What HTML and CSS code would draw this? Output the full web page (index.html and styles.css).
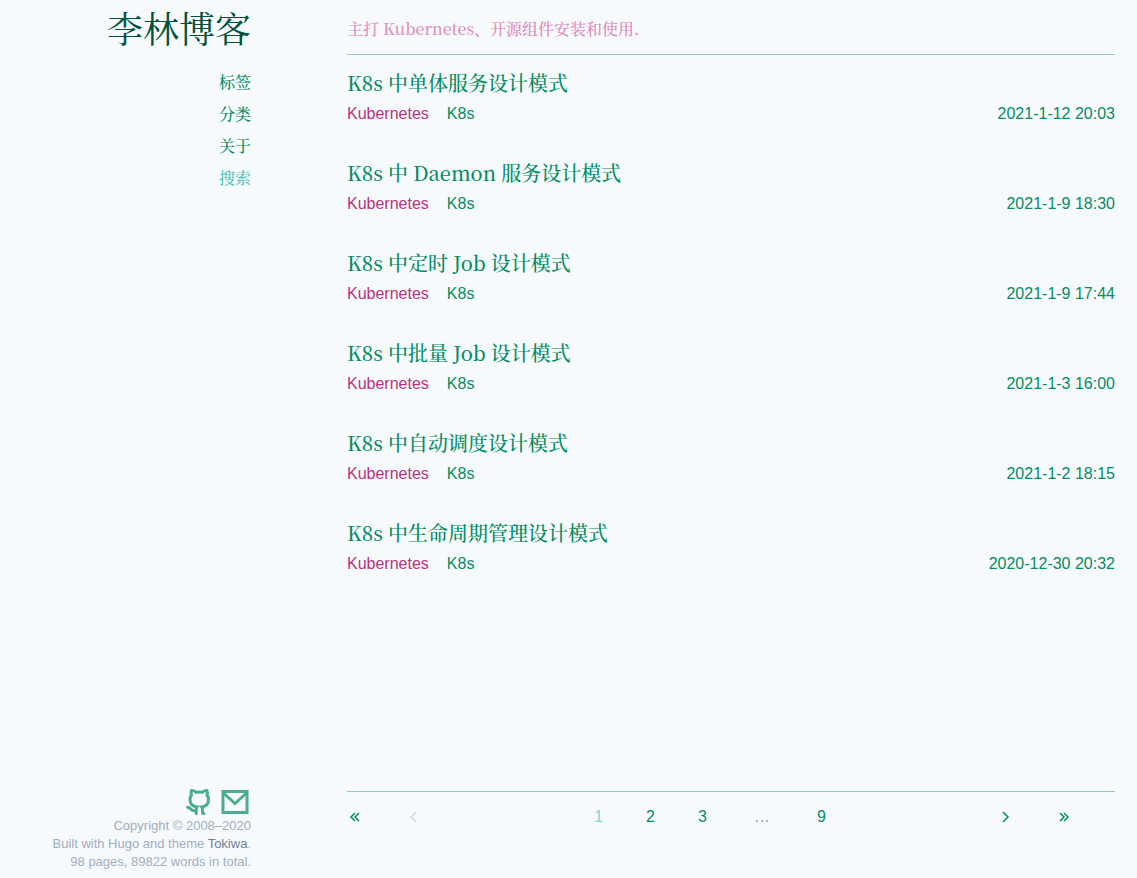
FILE: index.html
```html
<!DOCTYPE html>
<html lang="zh-CN">
<head>
<meta charset="utf-8">
<meta name="viewport" content="width=device-width, initial-scale=1">
<title>李林博客</title>
<link rel="stylesheet" href="styles.css">
</head>
<body>
<div class="page">
  <header class="sidebar">
    <h1 class="brand"><a href="#">李林博客</a></h1>
    <nav class="menu">
      <a href="#">标签</a>
      <a href="#">分类</a>
      <a href="#">关于</a>
      <a class="search" href="#">搜索</a>
    </nav>
    <div class="colophon">
      <div class="social">
        <a href="#" aria-label="GitHub"><svg viewBox="0 0 28 28"><path d="M11.200 25.500V21.500C11.200 20.500 11.500 19.700 12 19C8 18.500 5 16.200 5 11.500C5 9.700 5.500 8.300 6.500 7C6 5.500 6 4 6.500 2.500C8.500 2.500 10 3.300 11.200 4.300C13 3.800 15.500 3.800 17.300 4.300C18.500 3.300 20 2.500 22 2.500C22.500 4 22.500 5.500 22 7C23 8.300 23.500 9.700 23.500 11.500C23.500 16.200 20.500 18.500 16.700 19C17.300 19.700 17.500 20.500 17.500 21.500V24.500Q17.500 25.500 19 25.500M11.200 22.500C5.500 24 7 20 2.500 19.300"/></svg></a>
        <a href="#" aria-label="Email"><svg viewBox="0 0 28 28"><path d="M2 3.500H26V24.500H2ZM2 4.500L14 15.500L26 4.500"/></svg></a>
      </div>
      <p>Copyright © 2008–2020</p>
      <p>Built with Hugo and theme <a href="#">Tokiwa</a>.</p>
      <p>98 pages, 89822 words in total.</p>
    </div>
  </header>
  <div class="content">
    <p class="tagline">主打 Kubernetes、开源组件安装和使用.</p>
    <main class="posts">
      <article class="post">
        <h2><a href="#">K8s 中单体服务设计模式</a></h2>
        <div class="meta"><a class="category" href="#">Kubernetes</a><a href="#">K8s</a><time>2021-1-12 20:03</time></div>
      </article>
      <article class="post">
        <h2><a href="#">K8s 中 Daemon 服务设计模式</a></h2>
        <div class="meta"><a class="category" href="#">Kubernetes</a><a href="#">K8s</a><time>2021-1-9 18:30</time></div>
      </article>
      <article class="post">
        <h2><a href="#">K8s 中定时 Job 设计模式</a></h2>
        <div class="meta"><a class="category" href="#">Kubernetes</a><a href="#">K8s</a><time>2021-1-9 17:44</time></div>
      </article>
      <article class="post">
        <h2><a href="#">K8s 中批量 Job 设计模式</a></h2>
        <div class="meta"><a class="category" href="#">Kubernetes</a><a href="#">K8s</a><time>2021-1-3 16:00</time></div>
      </article>
      <article class="post">
        <h2><a href="#">K8s 中自动调度设计模式</a></h2>
        <div class="meta"><a class="category" href="#">Kubernetes</a><a href="#">K8s</a><time>2021-1-2 18:15</time></div>
      </article>
      <article class="post">
        <h2><a href="#">K8s 中生命周期管理设计模式</a></h2>
        <div class="meta"><a class="category" href="#">Kubernetes</a><a href="#">K8s</a><time>2020-12-30 20:32</time></div>
      </article>
    </main>
    <nav class="pagination" aria-label="Pagination">
      <div class="group arrows">
        <a href="#" aria-label="First"><svg viewBox="0 0 16 16"><path d="M8 4L4 8L8 12M12 4L8 8L12 12"/></svg></a>
        <span class="disabled"><svg viewBox="0 0 16 16"><path d="M10 3L5 8L10 13"/></svg></span>
      </div>
      <div class="group numbers">
        <a class="current" href="#">1</a>
        <a href="#">2</a>
        <a href="#">3</a>
        <span class="dots">…</span>
        <a href="#">9</a>
      </div>
      <div class="group arrows">
        <a href="#" aria-label="Next"><svg viewBox="0 0 16 16"><path d="M5 3L10 8L5 13"/></svg></a>
        <a href="#" aria-label="Last"><svg viewBox="0 0 16 16"><path d="M3 4L7 8L3 12M7 4L11 8L7 12"/></svg></a>
      </div>
    </nav>
  </div>
</div>
</body>
</html>
```
FILE: styles.css
```css
* { box-sizing: border-box; }

body {
  margin: 0;
  background: #f7fafd;
  color: #038c61;
  font: 16px/24px "Liberation Sans", Arial, "Noto Sans CJK SC", sans-serif;
}

h1, h2, p { margin: 0; font-weight: 400; }
a { color: inherit; text-decoration: none; }
svg { display: block; fill: none; stroke: currentColor; }

.page {
  display: grid;
  grid-template-columns: 1fr minmax(0, 768px);
  column-gap: 96px;
  min-height: 100vh;
  padding-right: 22px;
}

.sidebar {
  display: flex;
  flex-direction: column;
  text-align: right;
  padding-bottom: 7px;
}

.brand, .menu, .tagline, .post h2 {
  font-family: "Noto Serif CJK SC", "Source Han Serif SC", "Liberation Serif", "Noto Sans CJK SC", serif;
}

.brand {
  padding: 1px 0 11px;
  color: #00533a;
  font-size: 36px;
  line-height: 54px;
}

.menu {
  display: flex;
  flex-direction: column;
  font-weight: 500;
  line-height: 32px;
}

.menu .search { color: #4fc4bc; }

.colophon {
  margin-top: auto;
  color: #a0aec0;
  font-size: 13px;
  line-height: 18px;
}

.colophon p a { color: #718096; }

.social {
  display: flex;
  justify-content: flex-end;
  gap: 8px;
  padding: 0 2px 1px 0;
  color: #4eac8e;
}

.social svg { width: 28px; height: 28px; stroke-width: 3; stroke-linecap: round; }

.content { display: flex; flex-direction: column; }

.tagline {
  padding: 17px 0 13px;
  border-bottom: 1px solid #8fcdba;
  color: #df8bbd;
  font-weight: 500;
}

.posts {
  display: flex;
  flex-direction: column;
  gap: 32px;
  padding: 13px 0 32px;
}

.post h2 { font-size: 20px; line-height: 30px; font-weight: 500; }
.meta { display: flex; gap: 18px; line-height: 24px; padding-top: 4px; }
.meta .category { color: #b83280; }
.meta time { margin-left: auto; }

.pagination {
  display: flex;
  justify-content: space-between;
  margin-top: auto;
  padding: 13px 42px 49px 0;
  border-top: 1px solid #8fcdba;
}

.group { display: flex; align-items: center; }
.arrows { gap: 43px; }
.arrows svg { width: 16px; height: 16px; stroke-width: 1.5; }
.numbers { gap: 43px; }
.disabled { color: #d5d9dd; }
.current { color: #81d6cf; }
.dots { padding: 0 4px; color: #909da0; }
```
